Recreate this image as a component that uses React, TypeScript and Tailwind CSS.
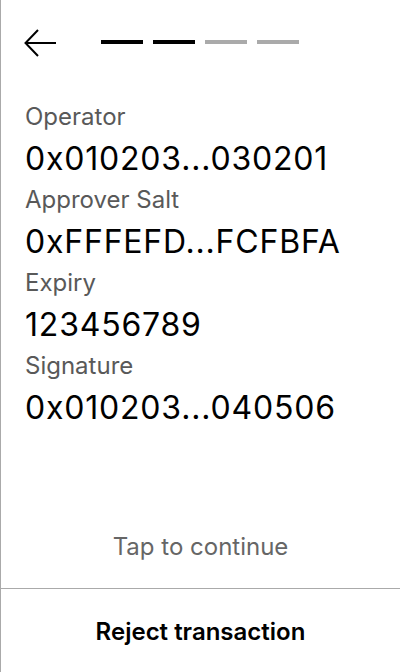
import React from "react"

const fields = [
    { label: "Operator", value: "0x010203...030201" },
    { label: "Approver Salt", value: "0xFFFEFD...FCFBFA" },
    { label: "Expiry", value: "123456789" },
    { label: "Signature", value: "0x010203...040506" },
]

function BackArrow() {
    return (
        <svg width="34" height="30" viewBox="0 0 34 30" fill="none" stroke="black" strokeWidth="2">
            <path d="M32 14H2" />
            <path d="M14 1L1.5 14L14 27" />
        </svg>
    )
}

export default function App() {
    return (
        <div className="h-[672px] w-[400px] flex flex-col bg-white border-l border-[#aaaaaa] font-['Inter',sans-serif] text-black">
            <div className="flex items-start pt-[29px] pl-[23px]">
                <BackArrow />
                <div className="flex gap-[10px] ml-[43px] mt-[11px]">
                    <div className="w-[42px] h-[4px] bg-black" />
                    <div className="w-[42px] h-[4px] bg-black" />
                    <div className="w-[42px] h-[4px] bg-[#aaaaaa]" />
                    <div className="w-[42px] h-[4px] bg-[#aaaaaa]" />
                </div>
            </div>

            <div className="flex flex-col pl-[24px] pt-[42px]">
                {fields.map((f) => (
                    <div key={f.label} className="flex flex-col">
                        <span className="text-[24px] leading-[32px] text-[#595959]">{f.label}</span>
                        <span className="text-[32px] leading-[51px] tracking-[0.8px]">{f.value}</span>
                    </div>
                ))}
            </div>

            <div className="flex-1" />

            <div className="text-center text-[24px] leading-[28px] text-[#666666] pb-[27px]">Tap to continue</div>
            <div className="border-t border-[#aaaaaa] h-[84px] flex items-center justify-center pt-[2px]">
                <span className="text-[24px] leading-[28px] font-semibold">Reject transaction</span>
            </div>
        </div>
    )
}
